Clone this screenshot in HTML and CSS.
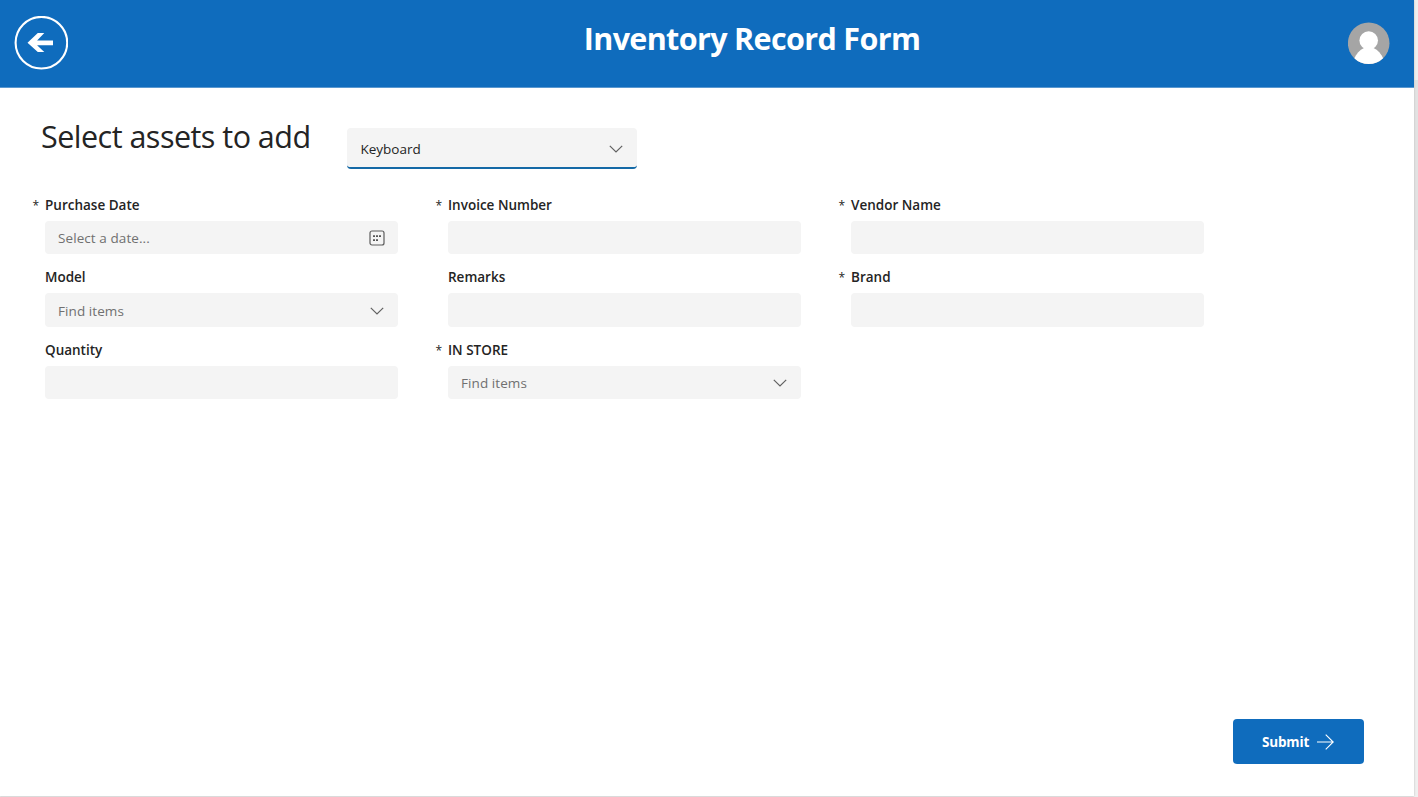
FILE: index.html
```html
<!DOCTYPE html>
<html lang="en">
<head>
<meta charset="utf-8">
<title>Inventory Record Form</title>
<link rel="stylesheet" href="styles.css">
</head>
<body>
<div class="viewport">
  <div class="screen">
    <header class="header">
      <svg class="back" viewBox="0 0 54 54" width="54" height="54" role="img" aria-label="Back">
        <circle cx="27.400" cy="26.700" r="25.800" fill="none" stroke="#fff" stroke-width="2.100"/>
        <path d="M13.500 26.800 23.800 17.100H30.300L23.100 24.400H39V29.200H23.100L30.300 36H23.800Z" fill="#fff"/>
      </svg>
      <h1 class="title">Inventory Record Form</h1>
      <svg class="avatar" viewBox="0 0 42 42" width="42" height="42" role="img" aria-label="User">
        <clipPath id="round"><circle cx="20.700" cy="21.200" r="20.800"/></clipPath>
        <g clip-path="url(#round)">
          <rect width="42" height="42" fill="#a5a5a5"/>
          <path d="M6 42V37C8.500 31.500 11.500 28 16 26H25.500C30 28 33 31.500 35.500 37V42Z" fill="#fff"/>
          <circle cx="20.700" cy="18.500" r="9.300" fill="#fff"/>
        </g>
      </svg>
    </header>
    <section class="picker">
      <h2 class="heading">Select assets to add</h2>
      <div class="asset-select">
        <span class="value">Keyboard</span>
        <svg class="chevron" viewBox="0 0 14 8" width="14" height="8"><path d="M.8.8 7 7 13.200.8"/></svg>
      </div>
    </section>
    <main class="form">
      <div class="field">
        <div class="label"><span class="star">*</span><span>Purchase Date</span></div>
        <div class="control"><span>Select a date...</span>
          <svg class="calendar" viewBox="0 0 16 16" width="16" height="16"><rect x="1" y="1" width="14" height="14" rx="2" fill="none" stroke="#5c5c5c" stroke-width="1.200"/><path d="M4 5.200h2v1.800H4zM7 5.200h2v1.800H7zM10 5.200h2v1.800h-2zM4 9.200h2V11H4zM7 9.200h2V11H7z" fill="#555"/></svg>
        </div>
      </div>
      <div class="field">
        <div class="label"><span class="star">*</span><span>Invoice Number</span></div>
        <div class="control"></div>
      </div>
      <div class="field">
        <div class="label"><span class="star">*</span><span>Vendor Name</span></div>
        <div class="control"></div>
      </div>
      <div class="field">
        <div class="label"><span>Model</span></div>
        <div class="control tall"><span>Find items</span>
          <svg class="chevron" viewBox="0 0 14 8" width="14" height="8"><path d="M.8.8 7 7 13.200.8"/></svg></div>
      </div>
      <div class="field">
        <div class="label"><span>Remarks</span></div>
        <div class="control tall"></div>
      </div>
      <div class="field">
        <div class="label"><span class="star">*</span><span>Brand</span></div>
        <div class="control tall"></div>
      </div>
      <div class="field">
        <div class="label"><span>Quantity</span></div>
        <div class="control"></div>
      </div>
      <div class="field">
        <div class="label"><span class="star">*</span><span>IN STORE</span></div>
        <div class="control"><span>Find items</span>
          <svg class="chevron" viewBox="0 0 14 8" width="14" height="8"><path d="M.8.8 7 7 13.200.8"/></svg></div>
      </div>
    </main>
    <footer class="footer">
      <button class="submit"><span>Submit</span>
        <svg viewBox="0 0 17 16" width="17" height="16"><path d="M0 8H16.300M8.700.7 16.200 8 8.700 15.300" fill="none" stroke="#fff" stroke-width="1.100"/></svg>
      </button>
    </footer>
  </div>
  <div class="edge"><div class="thumb"></div></div>
</div>
</body>
</html>
```

FILE: styles.css
```css
* { box-sizing: border-box; }
body { margin: 0; font-family: "Open Sans", "Noto Sans", sans-serif; color: #242424; }
.viewport { display: flex; width: 1418px; height: 797px; overflow: hidden; background: #e9e9e9; }
.screen { display: flex; flex-direction: column; width: 1414px; height: 796px; background: #fff; box-shadow: 0 0 2px #bbb; z-index: 1; }
.header { display: grid; grid-template-columns: 54px 1fr 42px; height: 88px; padding: 16px 24px 0 14px; background: #0f6cbd; border-bottom: 1px solid #5a98d0; }
.title { margin: 0; color: #fff; font-size: 30.500px; line-height: 44px; font-weight: 700; text-align: center; white-space: nowrap; padding-left: 88px; letter-spacing: -.65px; }
.avatar { margin-top: 6px; }
.picker { display: flex; height: 105px; padding: 26px 0 0 41px; }
.heading { width: 306px; margin: 0; font-size: 30.500px; line-height: 44px; font-weight: 400; white-space: nowrap; letter-spacing: -.52px; }
.asset-select { display: flex; align-items: center; justify-content: space-between; width: 290px; height: 41px; margin-top: 14px; padding: 3px 14px 0 13.500px; background: #f4f4f4; border-bottom: 2px solid #1469a6; border-radius: 4px; font-size: 13.500px; }
.chevron { display: block; flex: none; overflow: visible; }
.chevron path { fill: none; stroke: #616161; stroke-width: 1.200; }
.form { display: grid; grid-template-columns: repeat(3, 353px); grid-template-rows: 72px 73px 72px; column-gap: 50px; padding-left: 45px; }
.label { display: flex; height: 28px; line-height: 25px; font-size: 13.500px; font-weight: 600; white-space: nowrap; }
.star { width: 12.500px; margin-left: -12.500px; font-weight: 400; font-size: 12px; }
.control { display: flex; align-items: center; justify-content: space-between; height: 33px; padding: 1px 14px 0 13px; margin-top: .3px; background: #f4f4f4; border-radius: 4px; font-size: 13.500px; letter-spacing: .08px; color: #707070; }
.calendar { flex: none; margin-right: -1px; }
.control.tall { height: 34px; }
.footer { display: flex; justify-content: flex-end; margin-top: auto; padding: 0 50px 32px 0; }
.submit { display: flex; align-items: center; justify-content: center; gap: 8px; width: 131px; height: 45px; padding: 0 1px 0 0; border: 0; border-radius: 4px; background: #0f6cbd; color: #fff; font: 700 13.500px "Open Sans", sans-serif; letter-spacing: -.15px; }
.edge { width: 4px; padding-top: 80px; background: #efefef; }
.thumb { height: 170px; background: #e2e2e2; }
```
